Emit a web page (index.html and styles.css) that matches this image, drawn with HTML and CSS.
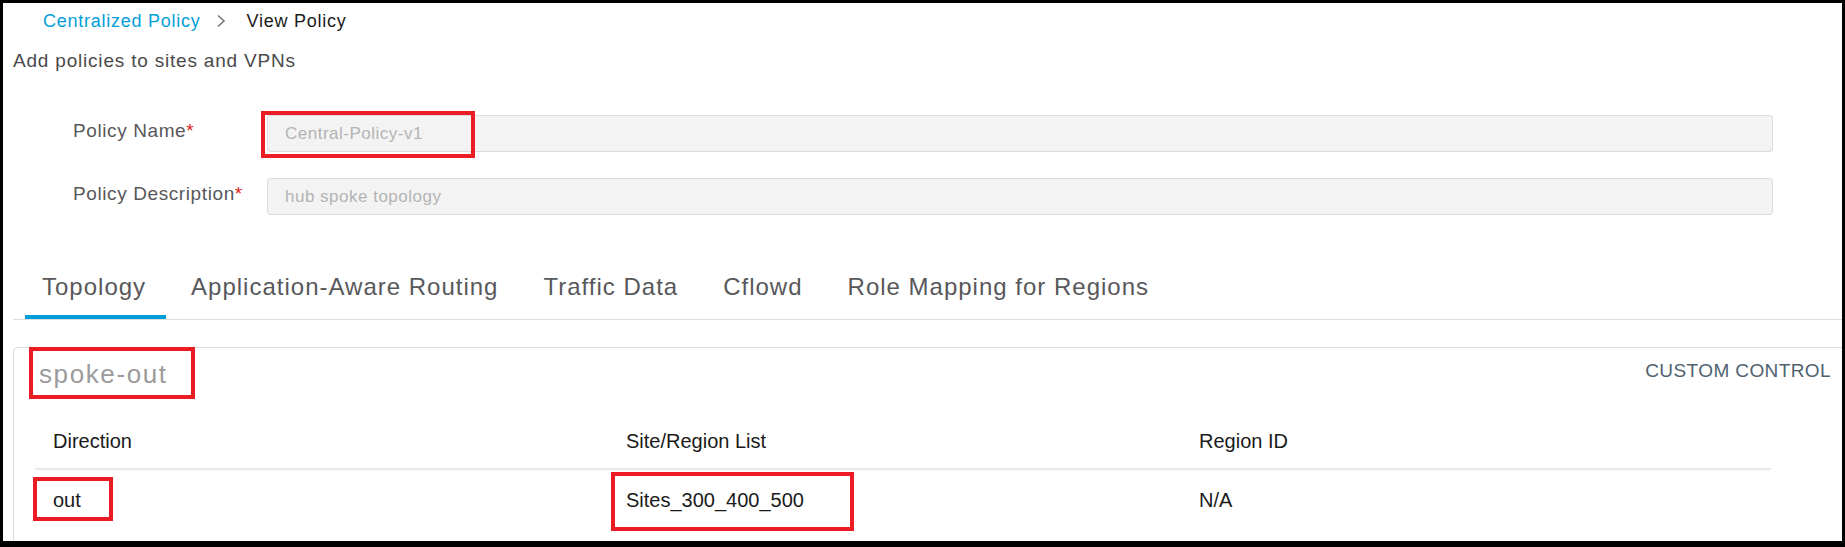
FILE: index.html
```html
<!DOCTYPE html>
<html>
<head>
<meta charset="utf-8">
<link rel="stylesheet" href="styles.css">
</head>
<body>
<div class="frame">
  <div class="page">
    <nav class="crumbs">
      <a class="crumb-link">Centralized Policy</a>
      <svg class="chev" width="10" height="14" viewBox="0 0 10 14"><polyline points="2,1.5 8,7 2,12.5" fill="none" stroke="#777" stroke-width="1.6"/></svg>
      <span class="crumb-cur">View Policy</span>
    </nav>
    <div class="subtitle">Add policies to sites and VPNs</div>

    <div class="form">
      <div class="form-row">
        <label class="label">Policy Name<span class="req">*</span></label>
        <div class="input">
          <span class="ph">Central-Policy-v1</span>
          <span class="mark mark-name"></span>
        </div>
      </div>
      <div class="form-row">
        <label class="label">Policy Description<span class="req">*</span></label>
        <div class="input"><span class="ph">hub spoke topology</span></div>
      </div>
    </div>

    <div class="tabs">
      <div class="tab active">Topology</div>
      <div class="tab">Application-Aware Routing</div>
      <div class="tab">Traffic Data</div>
      <div class="tab">Cflowd</div>
      <div class="tab">Role Mapping for Regions</div>
    </div>

    <div class="card">
      <div class="card-head">
        <div class="card-title">spoke-out<span class="mark mark-title"></span></div>
        <div class="card-type">CUSTOM CONTROL</div>
      </div>
      <div class="table">
        <div class="thead">
          <div class="cell">Direction</div>
          <div class="cell">Site/Region List</div>
          <div class="cell">Region ID</div>
        </div>
        <div class="trow">
          <div class="cell"><span class="val">out<span class="mark mark-out"></span></span></div>
          <div class="cell"><span class="val">Sites_300_400_500<span class="mark mark-sites"></span></span></div>
          <div class="cell">N/A</div>
        </div>
      </div>
    </div>
  </div>
</div>
</body>
</html>
```
FILE: styles.css
```css
html, body {
  margin: 0;
  padding: 0;
  background: #000;
  overflow: hidden;
}
.frame {
  width: 1845px;
  height: 547px;
  padding: 3px 3px 6px 3px;
  box-sizing: border-box;
}
.page {
  background: #fff;
  height: 538px;
  overflow: hidden;
  font-family: "Liberation Sans", Arial, sans-serif;
  color: #58585b;
}
.crumbs {
  height: 36px;
  display: flex;
  align-items: center;
  padding-left: 40px;
  font-size: 18px;
  letter-spacing: 0.75px;
}
.crumb-link { color: #049fd9; }
.chev { margin: 0 21px 0 15px; }
.crumb-cur { color: #1a1a1a; }
.subtitle {
  height: 44px;
  line-height: 44px;
  padding-left: 10px;
  font-size: 19px;
  letter-spacing: 0.8px;
  color: #4a4a4a;
}
.form {
  margin-top: 32px;
  display: flex;
  flex-direction: column;
  gap: 26px;
}
.form-row {
  display: flex;
  align-items: center;
  height: 37px;
}
.label {
  flex: 0 0 264px;
  padding-left: 70px;
  box-sizing: border-box;
  font-size: 19px;
  letter-spacing: 0.6px;
  color: #58585b;
  margin-top: -5px;
  white-space: nowrap;
}
.req { color: #e2231a; }
.input {
  position: relative;
  width: 1506px;
  height: 37px;
  background: #f3f3f3;
  border: 1px solid #dcdcdc;
  border-radius: 3px;
  box-sizing: border-box;
  display: flex;
  align-items: center;
  padding-left: 17px;
}
.ph {
  font-size: 17px;
  letter-spacing: 0.5px;
  color: #b4b4b4;
}
.mark {
  position: absolute;
  border: 4px solid #ed1c24;
  box-sizing: border-box;
}
.mark-name { left: -7px; top: -5px; width: 214px; height: 47px; }
.tabs {
  margin: 52px 0 0 10px;
  display: flex;
  border-bottom: 1px solid #ddd;
}
.tab {
  font-size: 24px;
  letter-spacing: 1px;
  line-height: 40px;
  padding: 0 18px 8px 18px;
  border-bottom: 4px solid transparent;
  margin-right: 9px;
  color: #58585b;
}
.tab:first-child { padding: 0 20px 8px 17px; margin-left: 12px; margin-right: 7px; }
.tab.active { border-bottom-color: #049fd9; }
.card {
  margin: 27px -10px 0 10px;
  border-top: 1px solid #ddd;
  border-left: 1px solid #ddd;
  border-top-left-radius: 5px;
  height: 400px;
}
.card-head {
  height: 56px;
  display: flex;
  align-items: center;
  justify-content: space-between;
  padding: 0 21px 0 25px;
}
.card-title {
  position: relative;
  font-size: 26px;
  letter-spacing: 1.6px;
  color: #9b9b9b;
  margin-top: -4px;
}
.mark-title { left: -10px; top: -12px; width: 166px; height: 52px; }
.card-type {
  font-size: 19px;
  letter-spacing: 0.4px;
  color: #4f6270;
  margin-top: -10px;
}
.table {
  margin-left: 21px;
  width: 1736px;
  color: #1a1a1a;
  font-size: 20px;
}
.thead, .trow {
  display: grid;
  grid-template-columns: 573px 573px 1fr;
}
.thead {
  border-bottom: 1px solid #e2e2e2;
  box-shadow: 0 2px 2px -1px rgba(0,0,0,0.10);
}
.thead .cell {
  line-height: 24px;
  padding: 25px 0 15px 18px;
}
.trow .cell {
  line-height: 24px;
  padding: 19px 0 19px 18px;
}
.val { position: relative; }
.mark-out { left: -20px; top: -12px; width: 80px; height: 44px; }
.mark-sites { left: -15px; top: -17px; width: 243px; height: 59px; }
```
